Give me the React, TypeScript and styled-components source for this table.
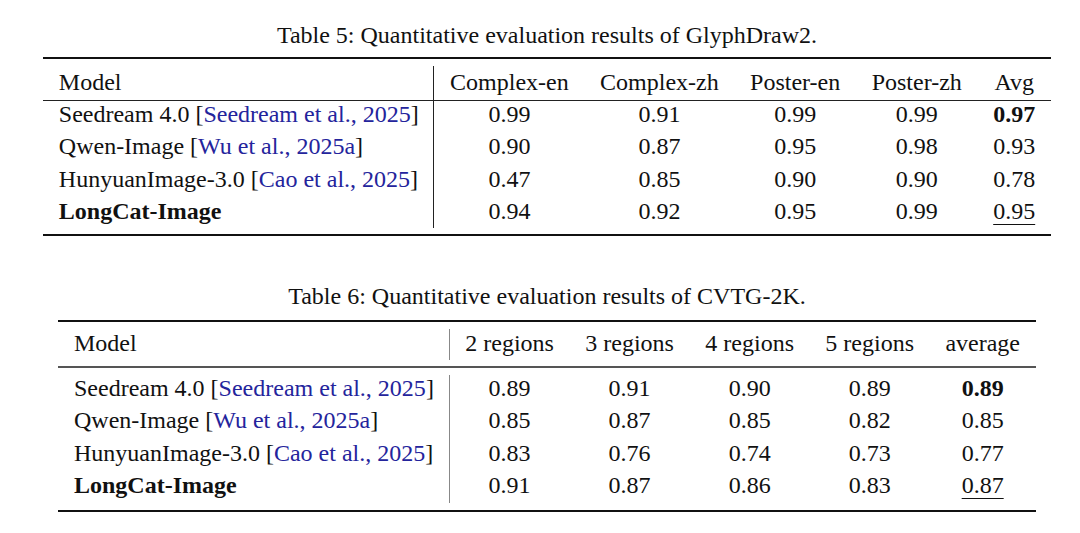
import React from 'react';
import styled, { createGlobalStyle } from 'styled-components';

const GlobalStyle = createGlobalStyle`
  html, body {
    margin: 0;
    padding: 0;
    background: #ffffff;
  }
  body {
    font-family: "Liberation Serif", "Times New Roman", serif;
    color: #111;
  }
`;

const Page = styled.div`
  box-sizing: border-box;
  width: 1080px;
  padding: 22px 0 0 14px;
  display: flex;
  flex-direction: column;
  align-items: center;
`;

const Block = styled.section<{ $gap: number }>`
  display: flex;
  flex-direction: column;
  align-items: center;
  margin-bottom: ${(p) => p.$gap}px;
`;

const Caption = styled.div<{ $space: number }>`
  font-size: 24px;
  line-height: 26px;
  margin-bottom: ${(p) => p.$space}px;
  white-space: nowrap;
`;

const Table = styled.table`
  border-collapse: collapse;
  border-top: 2px solid #111;
  border-bottom: 2px solid #111;
  font-size: 24px;
  line-height: 26px;
`;

const HeadCell = styled.th<{ $pt: number; $pb: number; $rule: string }>`
  font-weight: normal;
  text-align: center;
  white-space: nowrap;
  padding: ${(p) => p.$pt}px 15.7px ${(p) => p.$pb}px;
  border-bottom: ${(p) => p.$rule};
`;

const Cell = styled.td<{ $pt: number; $pb: number }>`
  text-align: center;
  white-space: nowrap;
  padding: ${(p) => p.$pt}px 15.7px ${(p) => p.$pb}px;
`;

/* first column cell carries the vertical separator, with LaTeX-style gaps */
const SplitCell = styled.td<{ $pt: number; $pb: number; $top: number; $bottom: number; $line: string }>`
  position: relative;
  text-align: left;
  white-space: nowrap;
  padding: ${(p) => p.$pt}px 15.7px ${(p) => p.$pb}px;
  &::after {
    content: '';
    position: absolute;
    right: 0;
    width: 1px;
    top: ${(p) => p.$top}px;
    bottom: ${(p) => p.$bottom}px;
    background: ${(p) => p.$line};
  }
`;

const SplitHead = styled(SplitCell).attrs({ as: 'th' })<{ $rule: string }>`
  font-weight: normal;
  border-bottom: ${(p) => p.$rule};
`;

const Cite = styled.span`
  color: #24249c;
`;

const Strong = styled.span`
  font-weight: bold;
`;

const Under = styled.span`
  text-decoration: underline;
  text-decoration-thickness: 1px;
  text-underline-offset: 5px;
`;

type Row = {
  name: React.ReactNode;
  values: string[];
  best?: number;
  second?: number;
};

type Spec = {
  caption: string;
  captionSpace: number;
  headers: string[];
  rows: Row[];
  headTop: number;
  headBottom: number;
  rule: string;
  line: string;
  pitchPad: number;
  firstTop: number;
  lastExtra: number;
  dividers: {
    headTop: number;
    headBottom: number;
    firstTop: number;
    lastBottom: number;
  };
};

const names: React.ReactNode[] = [
  <>Seedream 4.0 [<Cite>Seedream et al., 2025</Cite>]</>,
  <>Qwen-Image [<Cite>Wu et al., 2025a</Cite>]</>,
  <>HunyuanImage-3.0 [<Cite>Cao et al., 2025</Cite>]</>,
  <Strong>LongCat-Image</Strong>,
];

const table5: Spec = {
  caption: 'Table 5: Quantitative evaluation results of GlyphDraw2.',
  captionSpace: 9,
  headers: ['Model', 'Complex-en', 'Complex-zh', 'Poster-en', 'Poster-zh', 'Avg'],
  rows: [
    { name: names[0], values: ['0.99', '0.91', '0.99', '0.99', '0.97'], best: 4 },
    { name: names[1], values: ['0.90', '0.87', '0.95', '0.98', '0.93'] },
    { name: names[2], values: ['0.47', '0.85', '0.90', '0.90', '0.78'] },
    { name: names[3], values: ['0.94', '0.92', '0.95', '0.99', '0.95'], second: 4 },
  ],
  headTop: 10,
  headBottom: 5,
  rule: '1px solid #222',
  line: '#222',
  pitchPad: 6.3,
  firstTop: 0,
  lastExtra: 4,
  dividers: { headTop: 7, headBottom: -1, firstTop: 0, lastBottom: 6 },
};

const table6: Spec = {
  caption: 'Table 6: Quantitative evaluation results of CVTG-2K.',
  captionSpace: 11,
  headers: ['Model', '2 regions', '3 regions', '4 regions', '5 regions', 'average'],
  rows: [
    { name: names[0], values: ['0.89', '0.91', '0.90', '0.89', '0.89'], best: 4 },
    { name: names[1], values: ['0.85', '0.87', '0.85', '0.82', '0.85'] },
    { name: names[2], values: ['0.83', '0.76', '0.74', '0.73', '0.77'] },
    { name: names[3], values: ['0.91', '0.87', '0.86', '0.83', '0.87'], second: 4 },
  ],
  headTop: 8,
  headBottom: 10,
  rule: '2px solid #555',
  line: '#888',
  pitchPad: 6.5,
  firstTop: 6.5,
  lastExtra: 5,
  dividers: { headTop: 7, headBottom: 6, firstTop: 7, lastBottom: 7 },
};

function ResultTable({ spec }: { spec: Spec }) {
  const last = spec.rows.length - 1;
  return (
    <Table>
      <thead>
        <tr>
          {spec.headers.map((h, i) =>
            i === 0 ? (
              <SplitHead
                key={h}
                $pt={spec.headTop}
                $pb={spec.headBottom}
                $rule={spec.rule}
                $top={spec.dividers.headTop}
                $bottom={spec.dividers.headBottom}
                $line={spec.line}
              >
                {h}
              </SplitHead>
            ) : (
              <HeadCell key={h} $pt={spec.headTop} $pb={spec.headBottom} $rule={spec.rule}>
                {h}
              </HeadCell>
            )
          )}
        </tr>
      </thead>
      <tbody>
        {spec.rows.map((r, ri) => {
          const pt = ri === 0 ? spec.firstTop : 0;
          const pb = spec.pitchPad + (ri === last ? spec.lastExtra : 0);
          return (
            <tr key={ri}>
              <SplitCell
                $pt={pt}
                $pb={pb}
                $top={ri === 0 ? spec.dividers.firstTop : 0}
                $bottom={ri === last ? spec.dividers.lastBottom : 0}
                $line={spec.line}
              >
                {r.name}
              </SplitCell>
              {r.values.map((v, vi) => (
                <Cell key={vi} $pt={pt} $pb={pb}>
                  {r.best === vi ? <Strong>{v}</Strong> : r.second === vi ? <Under>{v}</Under> : v}
                </Cell>
              ))}
            </tr>
          );
        })}
      </tbody>
    </Table>
  );
}

export default function App() {
  return (
    <>
      <GlobalStyle />
      <Page>
        <Block $gap={47}>
          <Caption $space={table5.captionSpace}>{table5.caption}</Caption>
          <ResultTable spec={table5} />
        </Block>
        <Block $gap={0}>
          <Caption $space={table6.captionSpace}>{table6.caption}</Caption>
          <ResultTable spec={table6} />
        </Block>
      </Page>
    </>
  );
}
